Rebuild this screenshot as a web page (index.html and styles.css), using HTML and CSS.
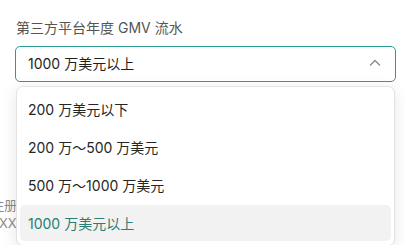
FILE: index.html
```html
<!DOCTYPE html>
<html lang="zh-CN">
<head>
<meta charset="utf-8">
<link rel="stylesheet" href="styles.css">
</head>
<body>
<div class="page">
  <div class="field">
    <div class="label">第三方平台年度 GMV 流水</div>
    <div class="select">
      <span class="value">1000 万美元以上</span>
      <svg class="chevron" width="12" height="12" viewBox="0 0 12 12"><path d="M1.5 7 L6 2.5 L10.5 7" fill="none" stroke="#8a8a8a" stroke-width="1.4" stroke-linecap="round" stroke-linejoin="round"/></svg>
    </div>
  </div>
  <div class="behind">
    <div class="behind-label">注册</div>
    <div class="behind-value">XX</div>
  </div>
  <ul class="dropdown">
    <li class="option">200 万美元以下</li>
    <li class="option">200 万～500 万美元</li>
    <li class="option">500 万～1000 万美元</li>
    <li class="option selected">1000 万美元以上</li>
  </ul>
</div>
</body>
</html>
```

FILE: styles.css
```css
* { box-sizing: border-box; }
html, body { margin: 0; padding: 0; background: #fff; }
body {
  font-family: "Inter", "Noto Sans CJK SC", sans-serif;
  font-size: 14px;
  overflow: hidden;
}
.page {
  position: relative;
  width: 405px;
  height: 245px;
  padding-top: 18px;
}
.field {
  display: flex;
  flex-direction: column;
  gap: 8px;
  margin: 0 9px 0 15px;
}
.label {
  line-height: 20px;
  color: #555555;
  padding-left: 1px;
}
.select {
  height: 36px;
  border: 1px solid #2b9c8f;
  border-radius: 5px;
  display: flex;
  align-items: center;
  justify-content: space-between;
  padding: 0 14px 0 12px;
}
.value {
  color: #1f1f1f;
  line-height: 20px;
}
.chevron { display: block; }
.behind {
  margin: 114px 0 0 -9px;
  display: flex;
  flex-direction: column;
  align-items: flex-start;
  color: #8c8c8c;
  font-size: 13px;
  line-height: 18px;
}
.behind-value { margin-left: 8px; }
.dropdown {
  position: absolute;
  top: 86px;
  left: 16px;
  width: 379px;
  margin: 0;
  padding: 4px 3px;
  list-style: none;
  background: #fff;
  border: 1px solid #e3e3e3;
  border-radius: 7px;
  box-shadow: 0 4px 16px rgba(0, 0, 0, 0.10);
  display: flex;
  flex-direction: column;
  gap: 2px;
}
.option {
  height: 36px;
  display: flex;
  align-items: center;
  padding-left: 8px;
  color: #262626;
  border-radius: 5px;
}
.option.selected {
  background: #f2f2f2;
  color: #2a7e74;
}
```
